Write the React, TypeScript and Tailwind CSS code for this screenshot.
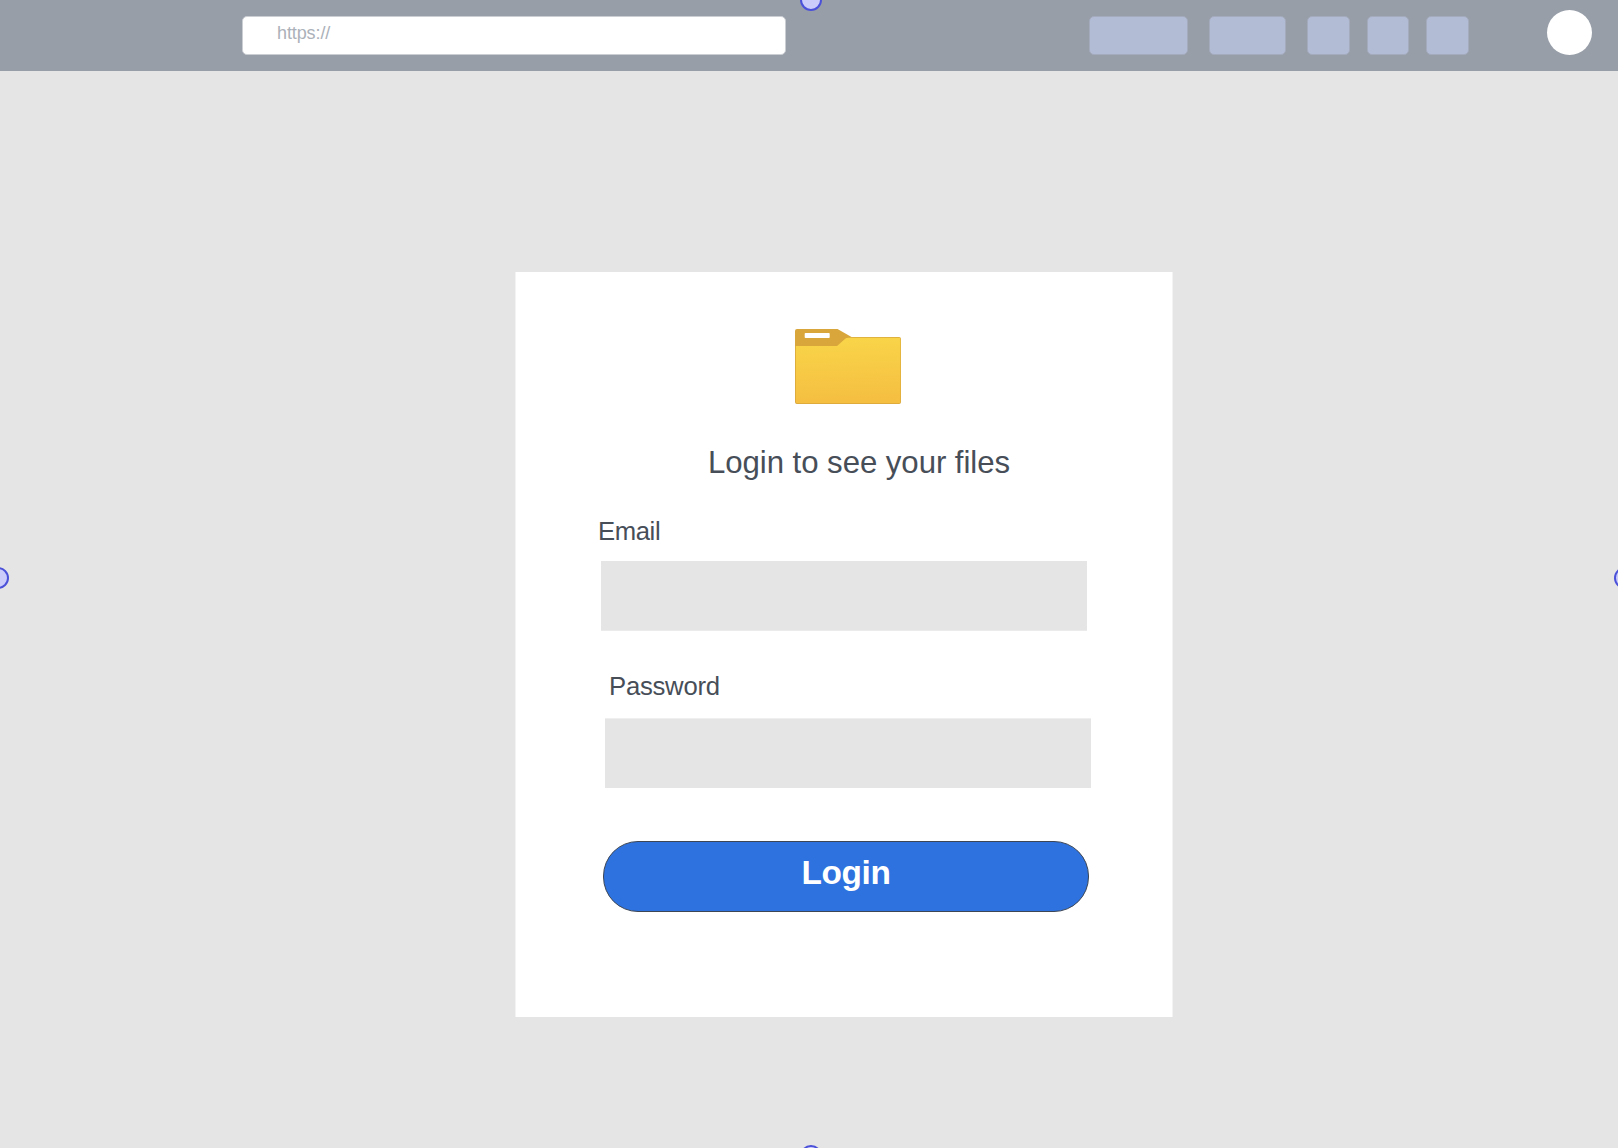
const toolbarBlocks = [
  'w-[99px]',
  'ml-[21px] w-[77px]',
  'ml-[21px] w-[43px]',
  'ml-[17px] w-[42px]',
  'ml-[17px] w-[43px]',
];

const handles = [
  'left-[800px] top-[-11px]',
  'left-[-13px] top-[567px]',
  'left-[1614px] top-[567px]',
  'left-[800px] top-[1145px]',
];

function FolderIcon() {
  return (
    <svg width="106" height="75" viewBox="0 0 106 75" className="block" aria-hidden="true">
      <defs>
        <linearGradient id="folder-front" x1="0" y1="0" x2="0.06" y2="1">
          <stop offset="0" stopColor="#f9d549" />
          <stop offset="1" stopColor="#f5bf41" />
        </linearGradient>
      </defs>
      <path d="M2 0H42.5L56.5 8H104Q106 8 106 10V73Q106 75 104 75H2Q0 75 0 73V2Q0 0 2 0Z" fill="#d8a63a" />
      <path d="M0.8 17H42L50.5 9.5Q51.5 8.8 53 8.8H104Q105.4 8.8 105.4 10.2V72.5Q105.4 74.2 104 74.2H2.2Q0.8 74.2 0.8 72.5Z" fill="url(#folder-front)" />
      <rect x="9.7" y="4" width="25" height="5" rx="0.8" fill="#fff" />
    </svg>
  );
}

export default function App() {
  return (
    <div className="relative h-[1148px] w-[1618px] overflow-hidden bg-[#e5e5e5] font-['Liberation_Sans',Arial,sans-serif] text-[#474e58]">
      <header className="flex h-[71px] items-start bg-[#979ea8]">
        <div className="mt-4 ml-[242px] h-[39px] w-[544px] rounded-[5px] border border-[#cbced3] bg-white pl-[34px]">
          <span className="block text-[18px] leading-[33px] tracking-[-0.1px] text-[#abb1b9]">https://</span>
        </div>
        <div className="mt-4 ml-[303px] flex">
          {toolbarBlocks.map((size, i) => (
            <div key={i} className={`h-[39px] rounded-[5px] border border-[#a3abbc] bg-[#b2bcd5] ${size}`} />
          ))}
        </div>
        <div className="mt-[10px] ml-[78px] size-[45px] rounded-full bg-white" />
      </header>

      <main className="mt-[201px] ml-[515px] flex h-[745px] w-[658px] flex-col items-start border-x border-[#f3f3f3] bg-white">
        <div className="mt-[57px] ml-[279px]">
          <FolderIcon />
        </div>
        <h1 className="mt-[40px] ml-[192px] text-[31.2px] leading-[37px] tracking-[-0.06px] whitespace-nowrap">Login to see your files</h1>
        <label className="mt-[35px] ml-[82px] text-[25.7px] leading-[30px] tracking-[-0.4px]">Email</label>
        <div className="mt-[15px] ml-[85px] h-[70px] w-[486px] border-b border-[#ebebeb] bg-[#e5e5e5]" />
        <label className="mt-[40px] ml-[93px] text-[25.7px] leading-[30px] tracking-[-0.25px]">Password</label>
        <div className="mt-[17px] ml-[89px] h-[70px] w-[486px] border-t border-[#efefef] bg-[#e5e5e5]" />
        <button className="mt-[53px] ml-[87px] flex h-[71px] w-[486px] justify-center rounded-[35px] border border-[#3d4654] bg-[#2d72de] pt-[11px] text-[33.4px] leading-[40px] font-bold tracking-[-0.4px] text-white">
          Login
        </button>
      </main>

      {handles.map((place) => (
        <div key={place} className={`absolute size-[22px] rounded-full border-2 border-[#4b51d9] bg-[#ccccfb] ${place}`} />
      ))}
    </div>
  );
}
